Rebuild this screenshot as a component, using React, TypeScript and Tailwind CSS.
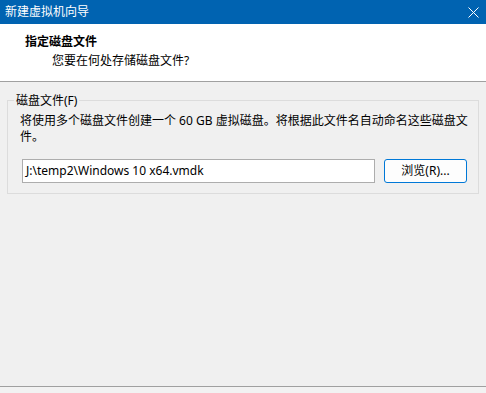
import React from "react";

export default function App() {
  const font = { fontFamily: '"Segoe UI", "Noto Sans", "Noto Sans CJK SC", sans-serif' };
  return (
    <div className="w-[486px] h-[393px] bg-[#f0f0f0] flex flex-col overflow-hidden text-[12px] text-black" style={font}>
      <div className="h-[24px] bg-[#0063b1] flex items-center justify-between pl-[5px] pr-[4px] text-white shrink-0">
        <span className="text-[12px] leading-none">新建虚拟机向导</span>
        <svg width="11" height="11" viewBox="0 0 11 11" className="mr-[3px]">
          <path d="M0.5 0.5 L10.5 10.5 M10.5 0.5 L0.5 10.5" stroke="white" strokeWidth="1" />
        </svg>
      </div>
      <div className="h-[58px] bg-white border-b border-[#a0a0a0] shrink-0 pt-[10px]">
        <div className="pl-[25px] font-bold leading-[16px]">指定磁盘文件</div>
        <div className="pl-[52px] mt-[3px] leading-[16px]">您要在何处存储磁盘文件?</div>
      </div>
      <div className="flex-1 px-[7px] pt-[18px]">
        <div className="relative border border-[#dcdcdc] h-[94px] pl-[12px] pt-[12px]">
          <span className="absolute -top-[8px] left-[6px] bg-[#f0f0f0] px-[2px] leading-[16px]">磁盘文件(F)</span>
          <div className="leading-[16px] mr-[-4px]">将使用多个磁盘文件创建一个 60 GB 虚拟磁盘。将根据此文件名自动命名这些磁盘文件。</div>
          <div className="flex items-center mt-[14px] ml-[2px] gap-[9px]">
            <div className="w-[353px] h-[24px] bg-white border border-[#adadad] flex items-center pl-[3px]">J:\temp2\Windows 10 x64.vmdk</div>
            <button className="w-[83px] h-[24px] rounded-[3px] border border-[#0078d7] bg-[#fdfdfd] flex items-center justify-center">浏览(R)...</button>
          </div>
        </div>
      </div>
      <div className="h-[7px] border-t border-[#a0a0a0] bg-[#f2f2f2] shrink-0"></div>
    </div>
  );
}
